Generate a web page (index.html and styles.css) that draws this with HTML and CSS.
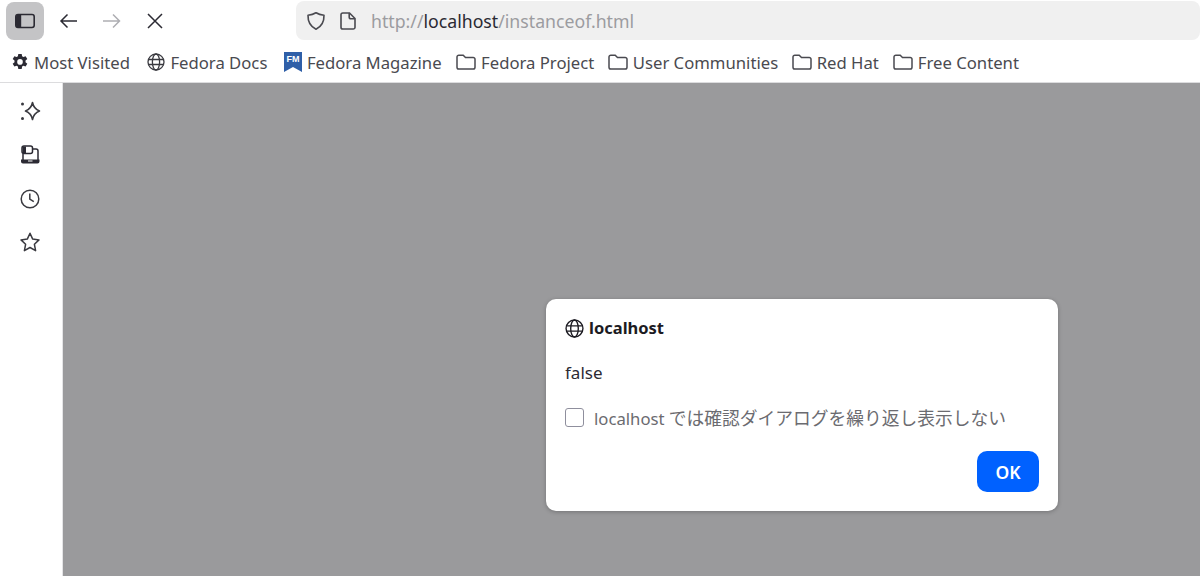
FILE: index.html
```html
<!DOCTYPE html>
<html lang="ja">
<head>
<meta charset="utf-8">
<title>localhost</title>
<link rel="stylesheet" href="styles.css">
</head>
<body>
<header class="chrome">
  <div class="toolbar">
    <button class="tool tool-active" aria-label="Sidebar">
      <svg width="20" height="20" viewBox="0 0 20 20"><rect x="0.800" y="3.500" width="18.400" height="13" rx="2.200" fill="none" stroke="#2b2a33" stroke-width="1.600"/><path d="M1 5.700a2 2 0 0 1 2-2h3.200v12.600H3a2 2 0 0 1-2-2z" fill="#2b2a33"/></svg>
    </button>
    <button class="tool" aria-label="Back">
      <svg width="20" height="20" viewBox="0 0 20 20"><path d="M2.500 10h16.500M9.500 3.500 3 10l6.500 6.500" fill="none" stroke="#2b2a33" stroke-width="1.500"/></svg>
    </button>
    <button class="tool" aria-label="Forward">
      <svg width="20" height="20" viewBox="0 0 20 20"><path d="M2 10h16.500M12 3.500 18.500 10 12 16.500" fill="none" stroke="#aeaeb2" stroke-width="1.500"/></svg>
    </button>
    <button class="tool" aria-label="Stop">
      <svg width="20" height="20" viewBox="0 0 20 20"><path d="M4 3l14 14M18 3 4 17" fill="none" stroke="#2b2a33" stroke-width="1.500"/></svg>
    </button>
    <div class="urlbar">
      <svg class="shield" width="20" height="20" viewBox="0 0 20 20"><path d="M10 1.800c2.400 1.500 5 2.200 8 2.400.2 6.400-2.400 11.200-8 14-5.600-2.800-8.200-7.600-8-14 3-.2 5.600-.9 8-2.400z" fill="none" stroke="#4a4a50" stroke-width="1.600" stroke-linejoin="round"/></svg>
      <svg class="page" width="16" height="18" viewBox="0 0 16 18"><path d="M2.800 1h6.700L15 6.500v8.700a1.800 1.800 0 0 1-1.800 1.800H2.800A1.800 1.800 0 0 1 1 15.200V2.800A1.800 1.800 0 0 1 2.800 1zM9.200 1v4a1.800 1.800 0 0 0 1.800 1.800h4" fill="none" stroke="#4a4a50" stroke-width="1.600"/></svg>
      <span class="url"><span class="dim">http://</span>localhost<span class="dim">/instanceof.html</span></span>
    </div>
  </div>
  <nav class="bookmarks">
    <span class="bm">
      <svg width="18" height="18" viewBox="0 0 18 18"><path d="M7.300 1h3.400l.4 2.300 1.300.7 2.200-.8 1.700 2.900-1.800 1.500v1.600l1.800 1.500-1.700 2.900-2.200-.8-1.300.7-.4 2.500H7.300l-.4-2.500-1.300-.7-2.200.8-1.700-2.900 1.800-1.500V7.600L1.700 6.100l1.700-2.900 2.200.8 1.300-.7z" fill="#2b2a33"/><circle cx="9" cy="8.900" r="2.800" fill="#fff"/></svg>
      Most Visited
    </span>
    <span class="bm">
      <svg width="18" height="18" viewBox="0 0 18 18"><g fill="none" stroke="#3a3a40" stroke-width="1.300"><circle cx="9" cy="9" r="8"/><ellipse cx="9" cy="9" rx="3.600" ry="8"/><path d="M1.500 6.500h15M1.500 11.500h15"/></g></svg>
      Fedora Docs
    </span>
    <span class="bm">
      <svg width="18" height="20" viewBox="0 0 18 20"><path d="M0 0h18v20l-9-5-9 5z" fill="#2f5fa8"/><text x="9" y="9.500" class="fm-text" text-anchor="middle">FM</text></svg>
      Fedora Magazine
    </span>
    <span class="bm"><svg width="20" height="18" viewBox="0 0 20 18"><use href="#fold"/></svg>Fedora Project</span>
    <span class="bm"><svg width="20" height="18" viewBox="0 0 20 18"><use href="#fold"/></svg>User Communities</span>
    <span class="bm"><svg width="20" height="18" viewBox="0 0 20 18"><use href="#fold"/></svg>Red Hat</span>
    <span class="bm"><svg width="20" height="18" viewBox="0 0 20 18"><use href="#fold"/></svg>Free Content</span>
  </nav>
</header>
<svg class="defs" width="0" height="0"><defs><path id="fold" d="M2.800 2.200h4.400l2.300 2.300h7.700a1.800 1.800 0 0 1 1.800 1.800v8a1.800 1.800 0 0 1-1.800 1.800H2.800A1.800 1.800 0 0 1 1 14.300V4a1.800 1.800 0 0 1 1.800-1.800z" fill="none" stroke="#4a4a50" stroke-width="1.500"/></defs></svg>
<main class="workspace">
  <aside class="sidebar">
    <svg width="22" height="22" viewBox="0 0 22 22"><path d="M13.500 2.500c.8 4 2.700 6.800 7 8.500-4.300 1.700-6.200 4.500-7 8.500-.8-4-2.700-6.800-7-8.500 4.300-1.700 6.200-4.500 7-8.500z" fill="none" stroke="#3a3a40" stroke-width="1.600" stroke-linejoin="round"/><circle cx="3.500" cy="4" r="1.500" fill="#3a3a40"/><circle cx="3.500" cy="18.500" r="1.500" fill="#3a3a40"/></svg>
    <svg width="22" height="22" viewBox="0 0 22 22"><rect x="3" y="2" width="10.500" height="7.500" rx="2" fill="none" stroke="#2b2a33" stroke-width="1.500"/><rect x="3.500" y="2.500" width="3.500" height="6.500" fill="#2b2a33"/><path d="M14 5h3a2 2 0 0 1 2 2v9M4 9.500V16" fill="none" stroke="#2b2a33" stroke-width="1.500"/><path fill-rule="evenodd" d="M2 15.500h18.500v2a2 2 0 0 1-2 2H4a2 2 0 0 1-2-2zM9 16.500v1h4.500v-1z" fill="#2b2a33"/></svg>
    <svg width="22" height="22" viewBox="0 0 22 22"><circle cx="11" cy="11" r="8.800" fill="none" stroke="#3a3a40" stroke-width="1.500"/><path d="M10.800 5.500v5.700l4 2.500" fill="none" stroke="#3a3a40" stroke-width="1.500"/></svg>
    <svg width="22" height="22" viewBox="0 0 22 22"><path d="M11 2.200l2.700 5.900 6.300.8-4.600 4.400 1.200 6.400-5.600-3.200-5.600 3.200 1.200-6.400L2 8.900l6.300-.8z" fill="none" stroke="#3a3a40" stroke-width="1.500" stroke-linejoin="round"/></svg>
  </aside>
  <section class="content">
    <div class="dialog">
      <div class="origin">
        <svg width="19" height="19" viewBox="0 0 18 18"><g fill="none" stroke="#1c1b22" stroke-width="1.300"><circle cx="9" cy="9" r="8"/><ellipse cx="9" cy="9" rx="3.600" ry="8"/><path d="M1.500 6.500h15M1.500 11.500h15"/></g></svg>
        <span>localhost</span>
      </div>
      <p class="message">false</p>
      <label class="check"><span class="box"></span><span>localhost <span class="jp">では確認ダイアログを繰り返し表示しない</span></span></label>
      <div class="actions"><button class="ok">OK</button></div>
    </div>
  </section>
</main>
</body>
</html>
```
FILE: styles.css
```css
* { box-sizing: border-box; }
html, body { margin: 0; height: 576px; overflow: hidden; }
body {
  background: #fff;
  color: #1c1b22;
  font-family: "Noto Sans", "Noto Sans CJK JP", sans-serif;
  display: flex;
  flex-direction: column;
}
svg { display: block; flex: none; }
.defs { position: absolute; }
.chrome { height: 83px; background: #fff; border-bottom: 1px solid #dcdcde; flex: none; }
.toolbar { height: 41px; display: flex; align-items: center; padding-left: 6px; }
.tool {
  width: 38px; height: 38px; margin-right: 5px; padding: 0;
  border: 0; border-radius: 8px; background: none;
  display: flex; align-items: center; justify-content: center;
}
.tool-active { background: #c4c4c6; }
.urlbar {
  margin-left: 118px;
  width: 904px; height: 39px;
  background: #f0f0f0; border-radius: 8px;
  display: flex; align-items: center; padding-left: 10px;
  font-size: 17.700px;
}
.page { margin-left: 14px; }
.url { margin-left: 15px; color: #2b2a33; }
.dim { color: #9c9ca0; }
.bookmarks {
  height: 41px; display: flex; align-items: center;
  padding: 1px 0 0 11px; gap: 15.500px;
  font-size: 16.700px; color: #4a4a50;
}
.bm { display: flex; align-items: center; gap: 5px; white-space: nowrap; }
.bm:nth-child(2) { margin-left: 2px; }
.bm:nth-child(3) { margin-left: 1px; }
.bm:nth-child(4) { margin-left: -1px; }
.bm:nth-child(5) { margin-left: -2px; }
.bm:nth-child(6) { margin-left: -2px; }
.bm:nth-child(7) { margin-left: -1.500px; }
.fm-text { font-size: 9px; font-weight: 700; fill: #fff; font-family: "Liberation Sans", sans-serif; }
.workspace { flex: 1; display: flex; min-height: 0; }
.sidebar {
  width: 63px; flex: none; background: #fff; border-right: 1px solid #e4e4e6;
  display: flex; flex-direction: column; align-items: center;
  padding: 17px 3px 0 0; gap: 21.800px;
}
.content { flex: 1; background: #9a9a9c; position: relative; }
.dialog {
  position: absolute; left: 483px; top: 216px;
  width: 512px; height: 212px;
  background: #fff; border-radius: 10px;
  box-shadow: 0 1px 4px rgba(0,0,0,.25);
  padding: 18px 19px 0;
}
.origin {
  display: flex; align-items: center; gap: 5px;
  font-size: 16.500px; font-weight: 700; line-height: 22px; color: #1c1b22;
}
.message { margin: 23px 0 0; font-size: 17px; line-height: 22px; color: #2b2a33; }
.check {
  display: flex; align-items: center; gap: 10px;
  margin-top: 23px; font-size: 16.700px; line-height: 22px; color: #6b6b70;
}
.jp { font-size: 17.750px; }
.box { width: 19px; height: 19px; border: 1.500px solid #8f8f9d; border-radius: 3px; margin-top: -3px; }
.actions { display: flex; justify-content: flex-end; margin-top: 21px; }
.ok {
  width: 62px; height: 41px; padding: 0; border: 0; border-radius: 10px;
  background: #0061ff; color: #fff;
  font: 600 17.500px "Noto Sans", sans-serif;
}
```
